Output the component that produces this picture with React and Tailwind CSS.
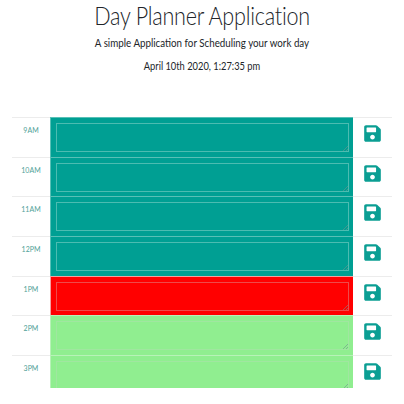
import React from 'react'
import { FaSave } from 'react-icons/fa'

const past = { bg: 'bg-[#009f93]', box: 'border-[#4cbcb1]', line: 'border-[#58c0b6]' }
const present = { bg: 'bg-[#ff0000]', box: 'border-[#ee4a4a]', line: 'border-[#f4a0a0]' }
const future = { bg: 'bg-[#90ee90]', box: 'border-[#a0e6a0]', line: 'border-[#b8f2b8]' }

const rows = [
  { hour: '9AM', ...past },
  { hour: '10AM', ...past },
  { hour: '11AM', ...past },
  { hour: '12PM', ...past },
  { hour: '1PM', ...present },
  { hour: '2PM', ...future },
  { hour: '3PM', ...future, last: true },
]

function Row({ row }) {
  return (
    <div className={`flex ${row.last ? 'h-[33px]' : 'h-[39.7px]'}`}>
      <div className="w-[38px] pt-[7px] border-t border-[#ececec] text-center text-[7px] leading-[10px] text-[#4f9f98]">{row.hour}</div>
      <div className={`w-[303px] px-[4.5px] pt-[5px] border-t border-l overflow-hidden ${row.line} ${row.bg}`}>
        <div className={`relative h-[29px] border ${row.box}`}>
          <svg className="absolute right-0 bottom-0" width="5" height="5" viewBox="0 0 5 5">
            <path d="M0 5 5 0M3 5 5 3" stroke="#6f928d" strokeWidth="0.6" />
          </svg>
        </div>
      </div>
      <div className="flex-1 pl-[10px] pt-[6px] border-t border-[#ececec]">
        <FaSave className="text-[#0b9e93]" size={19} />
      </div>
    </div>
  )
}

export default function App() {
  return (
    <div className="w-[404px] h-[404px] bg-white overflow-hidden font-['Lato',sans-serif] text-[#212529]">
      <header className="text-center">
        <h1 className="text-[26px] leading-[30px] font-light tracking-[-0.3px] scale-x-[.83]">Day Planner Application</h1>
        <p className="mt-[4.5px] text-[11.5px] leading-[16px] scale-x-[.85]">A simple Application for Scheduling your work day</p>
        <p className="mt-[7.5px] text-[11.5px] leading-[16px] scale-x-[.81]">April 10th 2020, 1:27:35 pm</p>
      </header>
      <div className="w-[380px] ml-[12px] mt-[43px]">
        {rows.map(row => <Row key={row.hour} row={row} />)}
      </div>
    </div>
  )
}
